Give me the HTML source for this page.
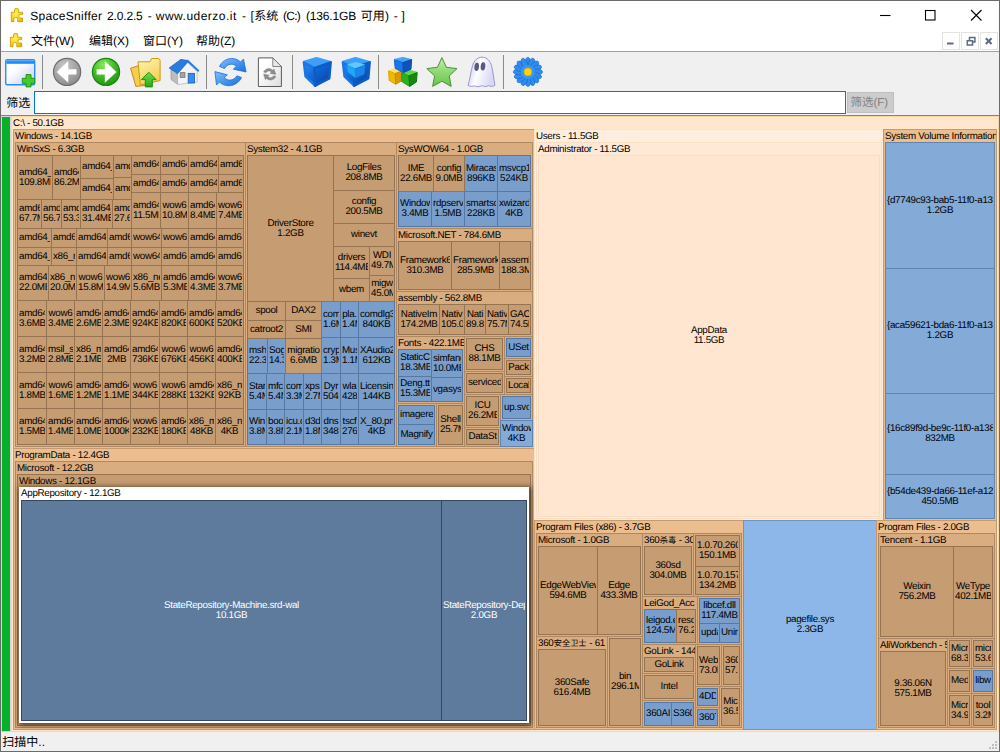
<!DOCTYPE html>
<html><head><meta charset="utf-8"><title>SpaceSniffer</title>
<style>
*{box-sizing:border-box;margin:0;padding:0}
html,body{width:1000px;height:752px;overflow:hidden;background:#fff}
body{font-family:"Liberation Sans","Noto Sans CJK SC",sans-serif;position:relative;color:#000;text-rendering:geometricPrecision;-webkit-font-smoothing:antialiased}
#win{position:absolute;left:0;top:0;width:1000px;height:752px;border:1px solid #6b6b6b;background:#fff;overflow:hidden}
.abs{position:absolute}
.k{display:inline-block;font-family:"Liberation Sans","Noto Sans CJK SC",sans-serif;letter-spacing:0;white-space:nowrap}
#title{position:absolute;left:0;top:8px;font-size:12px;line-height:16px;white-space:nowrap}
#title span{position:absolute;top:0;white-space:pre}
#title span.k{position:static}
#menu span{position:absolute;top:33.4px;font-size:12px;line-height:16px;white-space:nowrap}
#menu span.k{position:static}
#tb{position:absolute;left:1px;top:51px;width:998px;height:65px;background:#f0f0f0;border-top:1px solid #a0a0a0}
.sep{position:absolute;top:55px;width:1px;height:34px;background:#8a8a8a}
#tm{position:absolute;left:0;top:0;width:1000px;height:752px;font-size:9.8px;line-height:10px;letter-spacing:-0.3px}
.f{position:absolute;border:1px solid;overflow:hidden;white-space:nowrap}
.f .h,.hl .h{position:absolute;left:1px;top:1.600px;line-height:10px;white-space:nowrap}
.hl{position:absolute;background:#fff;overflow:hidden;box-shadow:1px 1px 5px 1px rgba(45,28,10,.8)}
.c{position:absolute;border:1px solid;overflow:hidden;display:flex;align-items:center}
.c b{display:block;width:100%;font-weight:normal;padding:0 1px;position:relative;top:0px}
.c i{display:block;font-style:normal;text-align:center;white-space:nowrap;overflow:hidden;height:10px}
.c.w{color:#fff}
#status{position:absolute;left:1px;top:732px;width:998px;height:19px;background:#f0f0f0}
</style></head><body>
<div id="win">
</div>
<!-- title bar -->
<div id="title">
<span style="left:30.3px;letter-spacing:.29px">SpaceSniffer</span>
<span style="left:107.1px;letter-spacing:-.17px">2.0.2.5</span>
<span style="left:147.8px">-</span>
<span style="left:155.8px;letter-spacing:.48px">www.uderzo.it</span>
<span style="left:242px">-</span>
<span style="left:250.4px">[</span>
<span style="left:254.2px"><span class="k" style="width:24px;font-size:12px">系统</span></span>
<span style="left:283px;letter-spacing:-.75px">(C:)</span>
<span style="left:306px;letter-spacing:-.17px">(136.1GB</span>
<span style="left:360.8px"><span class="k" style="width:24px;font-size:12px">可用</span></span>
<span style="left:385px">)</span><span style="left:393.8px">-</span><span style="left:401.6px">]</span>
</div>
<svg class="abs" style="left:0;top:0" width="30" height="52" viewBox="0 0 30 52">
<defs><radialGradient id="gpz" cx="0.4" cy="0.4" r="0.75"><stop offset="0" stop-color="#fff25a"/><stop offset="0.6" stop-color="#f6d21c"/><stop offset="1" stop-color="#e6ae00"/></radialGradient>
<path id="pz" d="M11.300 12.300H14.400V9.700Q14.400 8.400 16.500 8.400Q18.700 8.400 18.700 9.700V12.300H22.600V14.400H20.200Q18.900 14.400 18.900 16.200Q18.900 18 20.200 18H22.600V21.700H17.700V19.200Q17.700 17.500 15.800 17.500Q13.900 17.500 13.900 19.200V21.700H11.300Z" fill="url(#gpz)" stroke="#c99400" stroke-width=".8" stroke-linejoin="round"/></defs>
<use href="#pz"/><use href="#pz" x="-.9" y="25"/>
</svg>

<div id="menu">
<span style="left:31px"><span class="k" style="width:24px;font-size:12px">文件</span>(W)</span>
<span style="left:89px"><span class="k" style="width:24px;font-size:12px">编辑</span>(X)</span>
<span style="left:143px"><span class="k" style="width:24px;font-size:12px">窗口</span>(Y)</span>
<span style="left:196px"><span class="k" style="width:24px;font-size:12px">帮助</span>(Z)</span>
</div>
<!-- window controls -->
<svg class="abs" style="left:870px;top:5px" width="125" height="22" viewBox="0 0 125 22" fill="none" stroke="#000" stroke-width="1.1">
<path d="M10 10.5h10.5"/><rect x="55.5" y="5.5" width="9.5" height="9.5"/><path d="M101 5l10.5 10.5M111.5 5l-10.5 10.5"/></svg>
<!-- MDI controls -->
<div class="abs" style="left:942px;top:32px;width:18px;height:18px;border:1px solid #e3e3e3;background:#fff"></div>
<div class="abs" style="left:961px;top:32px;width:18px;height:18px;border:1px solid #e3e3e3;background:#fff"></div>
<div class="abs" style="left:980px;top:32px;width:18px;height:18px;border:1px solid #e3e3e3;background:#fff"></div>
<svg class="abs" style="left:942px;top:32px" width="56" height="18" viewBox="0 0 56 18" fill="none" stroke="#5d6b80">
<path d="M5 11.5h6.500" stroke-width="2"/>
<path d="M25.3 8.700h5.200v4.200h-5.200zM27.500 8.200v-2.700h5.400v4.400h-2.200" stroke-width="1.500"/>
<path d="M43.800 6.200l5.800 5.800M49.600 6.200l-5.800 5.800" stroke-width="2"/></svg>
<!-- toolbar -->
<div id="tb"></div>
<div class="sep" style="left:42px"></div><div class="sep" style="left:206px"></div><div class="sep" style="left:292px"></div><div class="sep" style="left:378px"></div><div class="sep" style="left:503px"></div>
<svg class="abs" style="left:0;top:52px" width="560" height="40" viewBox="0 52 560 40">
<defs>
<linearGradient id="gw" x1="0" y1="0" x2="1" y2="1"><stop offset="0.35" stop-color="#fff"/><stop offset="1" stop-color="#c4c6ff"/></linearGradient>
<radialGradient id="gg" cx="0.4" cy="0.3" r="0.8"><stop offset="0" stop-color="#c9c9c9"/><stop offset="1" stop-color="#858585"/></radialGradient>
<radialGradient id="gn" cx="0.4" cy="0.25" r="0.85"><stop offset="0" stop-color="#8be85a"/><stop offset="0.55" stop-color="#3db524"/><stop offset="1" stop-color="#1a8a0e"/></radialGradient>
<linearGradient id="gy" x1="0" y1="0" x2="0.4" y2="1"><stop offset="0" stop-color="#fff6b8"/><stop offset="1" stop-color="#f5cf4e"/></linearGradient>
<linearGradient id="gup" x1="0" y1="0" x2="0" y2="1"><stop offset="0" stop-color="#6ee04e"/><stop offset="1" stop-color="#28a818"/></linearGradient>
<linearGradient id="gb" x1="0" y1="0" x2="1" y2="1"><stop offset="0" stop-color="#7cc0ff"/><stop offset="1" stop-color="#1a6fdc"/></linearGradient>
<linearGradient id="gbl" x1="0" y1="0" x2="0.3" y2="1"><stop offset="0" stop-color="#2a8cf2"/><stop offset="1" stop-color="#0c5ccc"/></linearGradient>
<linearGradient id="gbr" x1="0" y1="0" x2="0.6" y2="1"><stop offset="0" stop-color="#1474e4"/><stop offset="1" stop-color="#0748a8"/></linearGradient>
<linearGradient id="gst" x1="0" y1="0" x2="0" y2="1"><stop offset="0" stop-color="#c4eeb0"/><stop offset="0.5" stop-color="#8fd970"/><stop offset="1" stop-color="#6cc548"/></linearGradient>
<linearGradient id="ggh" x1="0" y1="0" x2="1" y2="0.3"><stop offset="0" stop-color="#b4b4ee"/><stop offset="0.45" stop-color="#ffffff"/><stop offset="1" stop-color="#d8d8f6"/></linearGradient>
<linearGradient id="gpg" x1="0" y1="0" x2="1" y2="1"><stop offset="0.3" stop-color="#ffffff"/><stop offset="1" stop-color="#dcdcdc"/></linearGradient>
</defs>
<!-- 1 new window -->
<rect x="5.7" y="59.7" width="29" height="25" rx="1.5" fill="url(#gw)" stroke="#2a8df2" stroke-width="1.4"/>
<rect x="6.4" y="60.2" width="27.6" height="3.6" fill="#1c8cf6"/><rect x="6.4" y="60.2" width="27.6" height="1" fill="#63b4ff"/>
<path d="M26 74.6h5v3.7h3.7v5h-3.7v3.6h-5v-3.6h-3.7v-5H26z" fill="#45c92e" stroke="#1c9a0e" stroke-width="1"/>
<!-- 2 back -->
<circle cx="67.1" cy="71.9" r="13.6" fill="url(#gg)" stroke="#6f6f6f" stroke-width="1.2"/>
<path d="M56.6 71.9L68.3 61v8.200h8.200v5.400h-8.200v8.200z" fill="#fff"/>
<!-- 3 forward -->
<circle cx="106" cy="71.9" r="13.6" fill="url(#gn)" stroke="#1a8a0e" stroke-width="1.2"/>
<path d="M116.500 71.9L104.800 61v8.200h-8.200v5.400h8.200v8.200z" fill="#fff"/>
<!-- 4 folder up -->
<path d="M130.6 68.2l15-4.8 5.5 21.4-15.2 1.6z" fill="#f3ce52" stroke="#c28f10" stroke-width="1"/>
<path d="M138 61.8h12l1.600-3.300h7.200l1.300 1.600v20.500l-19.800 4.300z" fill="url(#gy)" stroke="#c99a14" stroke-width="1"/>
<path d="M148.8 72.3l7.400 7.300h-3.900v7.300h-7v-7.300h-3.900z" fill="url(#gup)" stroke="#1f9212" stroke-width="1"/>
<!-- 5 home -->
<path d="M171 69.5l6.600 4.200v10.500l-6.600-4.600z" fill="#bdbdbd" stroke="#8c8c8c" stroke-width=".6"/>
<path d="M177.6 73.5l10-11 9.600 9.200v10.400l-19.600 2.400z" fill="#f4f4f4" stroke="#a8a8a8" stroke-width=".6"/>
<path d="M169.2 68l11.600-8.600 7.200 1.200-10.600 12.600z" fill="#2a7ce0" stroke="#1a62c4" stroke-width=".8"/>
<path d="M176.6 73.6l11.200-12.600 11 10.200" fill="none" stroke="#2a7ce0" stroke-width="2"/>
<rect x="180.2" y="72.6" width="4.8" height="4.800" fill="#a4a4a4" stroke="#777" stroke-width=".8"/>
<rect x="188.2" y="73.4" width="6.2" height="9.6" fill="#3a8cec" stroke="#1a60c0" stroke-width=".9"/>
<!-- 6 refresh -->
<g fill="url(#gb)" stroke="#1e6ed6" stroke-width=".8" stroke-linejoin="round">
<path d="M219.500 66.500c3.500-8 14.500-11 21-4.500l3-3 2.600 13-12.800-2.800 3-3c-3.600-3.400-9.200-2.400-11.800 2.300z"/>
<path d="M241.500 77.500c-3.500 8-15 11.500-22 4.500l-3 3-1.600-13.400 12.400 3.200-3 3c4.200 3.800 9.800 2.600 12.600-2z"/>
</g>
<!-- 7 doc refresh -->
<path d="M258.4 57.9h14.400l8.600 8.600v20h-23z" fill="url(#gpg)" stroke="#5a5a5a" stroke-width="1"/>
<path d="M272.800 57.900v8.600h8.600z" fill="#e9e9e9" stroke="#6a6a6a" stroke-width=".8" stroke-linejoin="round"/>
<g fill="#8d8d8d" stroke="#7a7a7a" stroke-width=".4">
<path d="M263.6 72c1.800-3.600 6.200-4.600 9-1.800l1.400-1.400 1.800 5.600-5.800-1 1.400-1.400c-1.800-1.600-4.200-1.200-5.400.800z"/>
<path d="M276 76.600c-1.800 3.600-6.400 4.800-9.400 1.800l-1.400 1.200-1.600-5.600 5.600 1.200-1.400 1.400c2 1.800 4.400 1.400 5.800-.800z"/>
</g>
<!-- 8 cube -->
<g stroke-linejoin="round" stroke-width="2.600">
<path d="M304 62l12.500-3.800 14 4-16 5.800z" fill="#3f9ff8" stroke="#3f9ff8"/>
<path d="M304 62.600l10.400 5.600.800 17.400-9.600-9.400z" fill="url(#gbl)" stroke="#1a76e4"/>
<path d="M314.400 68.200l16.200-5.800-1.400 16-14 7.200z" fill="url(#gbr)" stroke="#0e5cc6"/>
</g>
<!-- 9 cube2 -->
<g stroke-linejoin="round" stroke-width="2.600">
<path d="M343 62l12.500-3.800 14 4-16 5.800z" fill="#3f9ff8" stroke="#3f9ff8"/>
<path d="M343 62.600l10.400 5.600.800 17.400-9.600-9.400z" fill="url(#gbl)" stroke="#1a76e4"/>
<path d="M353.400 68.200l16.200-5.800-1.400 16-14 7.200z" fill="url(#gbr)" stroke="#0e5cc6"/>
<path d="M347 64.500l9-2.400 9.400 2.600-10.400 3.800z" fill="#5cc8ff" stroke="none"/>
<path d="M347 64.800l7.800 3.800.4 9.400-7.400-6z" fill="#1ea8f6" stroke="none"/>
<path d="M354.800 68.600l10.400-3.800-.8 9.400-9.200 4z" fill="#1a86ea" stroke="none"/>
</g>
<!-- 10 cubes -->
<g stroke-linejoin="round" stroke-width="1">
<path d="M388.600 70.600l6-1.800 7.400 2.200-6.600 2.600z" fill="#ffe45a" stroke="#ffe45a"/>
<path d="M388.600 71l6.600 2.600.4 10.600-6.400-3.800z" fill="#f2b800" stroke="#e0a400"/>
<path d="M395.200 73.600l6.600-2.600v9.800l-6.200 3.400z" fill="#d89a00" stroke="#c88a00"/>
<path d="M401.600 72.400l7.600-2.400 8 2.400-8.200 3.200z" fill="#5cd84a" stroke="#5cd84a"/>
<path d="M401.600 72.800l7.400 3 .6 10.600-7.800-4.800z" fill="#2cb020" stroke="#22a018"/>
<path d="M409 75.800l8.200-3.200-.8 9.400-6.800 4.400z" fill="#168a10" stroke="#107a0c"/>
<path d="M394.400 59.400l8.400-2 8.800 2.200-8.600 3z" fill="#4aa2f8" stroke="#4aa2f8"/>
<path d="M394.400 59.800l8.600 2.800.4 10-8.200-4.200z" fill="#1a78e6" stroke="#1468d6"/>
<path d="M403 62.600l8.600-3-.6 9.600-7.600 3.400z" fill="#0c54bc" stroke="#0a4cae"/>
</g>
<!-- 11 star -->
<path d="M441.900 57.600l4.500 9.700 10.600 1.300-7.800 7.300 2 10.500-9.300-5.200-9.300 5.200 2-10.500-7.800-7.300 10.600-1.300z" fill="url(#gst)" stroke="#4f8f3c" stroke-width="1" stroke-linejoin="round"/>
<!-- 12 ghost -->
<path d="M468 85.400c2-6 2.600-13 4.400-19.400 1.600-5.600 5-8.800 9.600-8.800 5 0 8.400 3.600 9.800 9.400 1.400 6 2 13 3.200 18.600-1.600 1.400-4.600 1.600-6.400.4-2 1.200-5 1.200-6.800 0-2 1.400-5.400 1.400-7.200.2-2 .8-4.800.8-6.600-.4z" fill="url(#ggh)" stroke="#9090c4" stroke-width=".9"/>
<ellipse cx="476.700" cy="66.800" rx="2.300" ry="4.200" fill="#5a5a80" transform="rotate(6 476.400 66.900)"/>
<ellipse cx="483" cy="66.300" rx="2.300" ry="4.200" fill="#5a5a80" transform="rotate(6 482.600 66.300)"/>
<!-- 13 flower -->
<g transform="translate(527.900 71.900)">
<g fill="#2f8df0" stroke="#1a62c8" stroke-width=".6">
<g id="pt"><ellipse cx="0" cy="-9" rx="2.900" ry="5.600"/></g>
<use href="#pt" transform="rotate(22.500)"/><use href="#pt" transform="rotate(45)"/><use href="#pt" transform="rotate(67.500)"/><use href="#pt" transform="rotate(90)"/><use href="#pt" transform="rotate(112.500)"/><use href="#pt" transform="rotate(135)"/><use href="#pt" transform="rotate(157.500)"/><use href="#pt" transform="rotate(180)"/><use href="#pt" transform="rotate(202.500)"/><use href="#pt" transform="rotate(225)"/><use href="#pt" transform="rotate(247.500)"/><use href="#pt" transform="rotate(270)"/><use href="#pt" transform="rotate(292.500)"/><use href="#pt" transform="rotate(315)"/><use href="#pt" transform="rotate(337.500)"/>
</g>
<circle r="7" fill="#3a96f4"/>
<circle r="3.900" fill="#ffd500" stroke="#e8a800" stroke-width=".7"/>
</g>
</svg>

<!-- filter row -->
<div class="abs" style="left:6.3px;top:97px;line-height:12px;font-size:12px"><span class="k" style="width:24px;font-size:12px">筛选</span></div>
<div class="abs" style="left:34px;top:91px;width:812px;height:23px;background:#fff;border:1px solid #0078d7"></div>
<div class="abs" style="left:847px;top:92px;width:47px;height:21px;background:#cccccc;border:1px solid #bfbfbf;font-size:11.5px;line-height:21px;color:#838383;padding-left:2.500px;white-space:nowrap"><span class="k" style="width:23px;font-size:11.5px;color:#838383">筛选</span>(F)</div>
<!-- treemap -->
<div class="abs" style="left:1px;top:115px;width:998px;height:1px;background:#828282"></div>
<div class="abs" style="left:1px;top:116px;width:998px;height:616px;background:#d9d2da"></div>
<div class="abs" style="left:2px;top:117px;width:8px;height:614px;background:#07b02a"></div>
<div id="tm">
<div class="f" style="left:11px;top:116px;width:988px;height:616px;background:#fee7cc;border-color:#fdd6a6"><span class="h">C:\ - 50.1GB</span></div>
<div class="f" style="left:13px;top:129px;width:522px;height:320px;background:#ecbe8f;border-color:#c49a70"><span class="h">Windows - 14.1GB</span></div>
<div class="f" style="left:15px;top:142px;width:231px;height:305px;background:#d9ad80;border-color:#ae8862"><span class="h">WinSxS - 6.3GB</span></div>
<div class="f" style="left:245px;top:142px;width:152px;height:305px;background:#d9ad80;border-color:#ae8862"><span class="h">System32 - 4.1GB</span></div>
<div class="f" style="left:396px;top:142px;width:137px;height:87px;background:#d9ad80;border-color:#ae8862"><span class="h">SysWOW64 - 1.0GB</span></div>
<div class="f" style="left:396px;top:228px;width:137px;height:64px;background:#d9ad80;border-color:#ae8862"><span class="h">Microsoft.NET - 784.6MB</span></div>
<div class="f" style="left:396px;top:291px;width:137px;height:46px;background:#d9ad80;border-color:#ae8862"><span class="h">assembly - 562.8MB</span></div>
<div class="f" style="left:396px;top:336px;width:69px;height:68px;background:#d9ad80;border-color:#ae8862"><span class="h">Fonts - 422.1MB</span></div>
<div class="f" style="left:464px;top:336px;width:41px;height:36px;background:#d9ad80;border-color:#ae8862"></div>
<div class="f" style="left:464px;top:371px;width:41px;height:24px;background:#d9ad80;border-color:#ae8862"></div>
<div class="f" style="left:504px;top:336px;width:29px;height:23px;background:#d9ad80;border-color:#ae8862"></div>
<div class="f" style="left:504px;top:358px;width:29px;height:19px;background:#d9ad80;border-color:#ae8862"></div>
<div class="f" style="left:504px;top:376px;width:29px;height:19px;background:#d9ad80;border-color:#ae8862"></div>
<div class="f" style="left:396px;top:403px;width:41px;height:44px;background:#d9ad80;border-color:#ae8862"></div>
<div class="f" style="left:436px;top:403px;width:29px;height:44px;background:#d9ad80;border-color:#ae8862"></div>
<div class="f" style="left:464px;top:394px;width:37px;height:34px;background:#d9ad80;border-color:#ae8862"></div>
<div class="f" style="left:464px;top:427px;width:37px;height:20px;background:#d9ad80;border-color:#ae8862"></div>
<div class="f" style="left:500px;top:394px;width:33px;height:27px;background:#d9ad80;border-color:#ae8862"></div>
<div class="c " style="left:500px;top:420px;width:33px;height:27px;background:#84aad8;border-color:#6284b0"><b><i>Window</i><i>4KB</i></b></div>
<div class="f" style="left:13px;top:448px;width:522px;height:282px;background:#ecbe8f;border-color:#c49a70"><span class="h">ProgramData - 12.4GB</span></div>
<div class="f" style="left:15px;top:461px;width:518px;height:267px;background:#d9ad80;border-color:#ae8862"><span class="h">Microsoft - 12.2GB</span></div>
<div class="f" style="left:17px;top:474px;width:514px;height:252px;background:#c69c72;border-color:#967452"><span class="h">Windows - 12.1GB</span></div>
<div class="hl" style="left:19px;top:487px;width:510px;height:236px"><span class="h" style="left:2px">AppRepository - 12.1GB</span></div>
<div class="c w" style="left:21px;top:500px;width:421px;height:221px;background:#5e7b9d;border-color:#344862"><b><i>StateRepository-Machine.srd-wal</i><i>10.1GB</i></b></div>
<div class="c w" style="left:441px;top:500px;width:86px;height:221px;background:#5e7b9d;border-color:#344862"><b><i>StateRepository-Dep</i><i>2.0GB</i></b></div>
<div class="f" style="left:534px;top:129px;width:350px;height:392px;background:#ffeede;border-color:#fde2cb"><span class="h">Users - 11.5GB</span></div>
<div class="f" style="left:536px;top:142px;width:346px;height:377px;background:#fee9d6;border-color:#fcdec4"><span class="h">Administrator - 11.5GB</span></div>
<div class="c " style="left:538px;top:155px;width:342px;height:362px;background:#fee6d1;border-color:#fcdcc0"><b><i>AppData</i><i>11.5GB</i></b></div>
<div class="f" style="left:883px;top:129px;width:114px;height:392px;background:#ecbe8f;border-color:#c49a70"><span class="h">System Volume Information</span></div>
<div class="c " style="left:885px;top:142px;width:110px;height:127px;background:#84aad8;border-color:#6284b0"><b><i>{d7749c93-bab5-11f0-a13b</i><i>1.2GB</i></b></div>
<div class="c " style="left:885px;top:268px;width:110px;height:126px;background:#84aad8;border-color:#6284b0"><b><i>{aca59621-bda6-11f0-a13b</i><i>1.2GB</i></b></div>
<div class="c " style="left:885px;top:393px;width:110px;height:82px;background:#84aad8;border-color:#6284b0"><b><i>{16c89f9d-be9c-11f0-a138</i><i>832MB</i></b></div>
<div class="c " style="left:885px;top:474px;width:110px;height:45px;background:#84aad8;border-color:#6284b0"><b><i>{b54de439-da66-11ef-a12</i><i>450.5MB</i></b></div>
<div class="f" style="left:534px;top:520px;width:210px;height:210px;background:#ecbe8f;border-color:#c49a70"><span class="h">Program Files (x86) - 3.7GB</span></div>
<div class="f" style="left:536px;top:533px;width:107px;height:104px;background:#d9ad80;border-color:#ae8862"><span class="h">Microsoft - 1.0GB</span></div>
<div class="f" style="left:536px;top:636px;width:72px;height:92px;background:#d9ad80;border-color:#ae8862"><span class="h">360<span class="k" style="width:32.8px;font-size:8.2px;margin:0 0.3px">安全卫士</span> - 61</span></div>
<div class="f" style="left:607px;top:636px;width:36px;height:92px;background:#d9ad80;border-color:#ae8862"></div>
<div class="f" style="left:642px;top:533px;width:52px;height:64px;background:#d9ad80;border-color:#ae8862"><span class="h">360<span class="k" style="width:16.4px;font-size:8.2px;margin:0 0.3px">杀毒</span> - 30</span></div>
<div class="f" style="left:693px;top:533px;width:49px;height:64px;background:#d9ad80;border-color:#ae8862"></div>
<div class="f" style="left:642px;top:596px;width:56px;height:49px;background:#d9ad80;border-color:#ae8862"><span class="h">LeiGod_Acc - 2</span></div>
<div class="f" style="left:697px;top:596px;width:45px;height:49px;background:#d9ad80;border-color:#ae8862"></div>
<div class="f" style="left:642px;top:644px;width:54px;height:30px;background:#d9ad80;border-color:#ae8862"><span class="h">GoLink - 144</span></div>
<div class="f" style="left:642px;top:673px;width:54px;height:28px;background:#d9ad80;border-color:#ae8862"></div>
<div class="f" style="left:642px;top:700px;width:54px;height:28px;background:#d9ad80;border-color:#ae8862"></div>
<div class="f" style="left:695px;top:644px;width:27px;height:43px;background:#d9ad80;border-color:#ae8862"></div>
<div class="f" style="left:721px;top:644px;width:21px;height:43px;background:#d9ad80;border-color:#ae8862"></div>
<div class="f" style="left:695px;top:686px;width:25px;height:22px;background:#d9ad80;border-color:#ae8862"></div>
<div class="f" style="left:695px;top:707px;width:25px;height:21px;background:#d9ad80;border-color:#ae8862"></div>
<div class="f" style="left:719px;top:686px;width:23px;height:42px;background:#d9ad80;border-color:#ae8862"></div>
<div class="c " style="left:743px;top:520px;width:134px;height:210px;background:#8db7e8;border-color:#6e94c4"><b><i>pagefile.sys</i><i>2.3GB</i></b></div>
<div class="f" style="left:876px;top:520px;width:121px;height:210px;background:#ecbe8f;border-color:#c49a70"><span class="h">Program Files - 2.0GB</span></div>
<div class="f" style="left:878px;top:533px;width:117px;height:106px;background:#d9ad80;border-color:#ae8862"><span class="h">Tencent - 1.1GB</span></div>
<div class="f" style="left:878px;top:638px;width:70px;height:90px;background:#d9ad80;border-color:#ae8862"><span class="h">AliWorkbench - 5</span></div>
<div class="f" style="left:947px;top:638px;width:25px;height:31px;background:#d9ad80;border-color:#ae8862"></div>
<div class="f" style="left:971px;top:638px;width:24px;height:31px;background:#d9ad80;border-color:#ae8862"></div>
<div class="f" style="left:947px;top:668px;width:25px;height:26px;background:#d9ad80;border-color:#ae8862"></div>
<div class="f" style="left:971px;top:668px;width:24px;height:26px;background:#d9ad80;border-color:#ae8862"></div>
<div class="f" style="left:947px;top:693px;width:25px;height:35px;background:#d9ad80;border-color:#ae8862"></div>
<div class="f" style="left:971px;top:693px;width:24px;height:35px;background:#d9ad80;border-color:#ae8862"></div>
<div class="c " style="left:321px;top:301px;width:20px;height:37px;background:#7a9ecc;border-color:#5878a2"><b><i>com</i><i>1.6MB</i></b></div>
<div class="c " style="left:340px;top:301px;width:19px;height:37px;background:#7a9ecc;border-color:#5878a2"><b><i>pla.</i><i>1.4MB</i></b></div>
<div class="c " style="left:358px;top:301px;width:37px;height:37px;background:#7a9ecc;border-color:#5878a2"><b><i>comdlg3</i><i>840KB</i></b></div>
<div class="c " style="left:321px;top:337px;width:20px;height:37px;background:#7a9ecc;border-color:#5878a2"><b><i>cryp</i><i>1.3MB</i></b></div>
<div class="c " style="left:340px;top:337px;width:19px;height:37px;background:#7a9ecc;border-color:#5878a2"><b><i>Mus</i><i>1.1MB</i></b></div>
<div class="c " style="left:358px;top:337px;width:37px;height:37px;background:#7a9ecc;border-color:#5878a2"><b><i>XAudio2</i><i>612KB</i></b></div>
<div class="c " style="left:321px;top:373px;width:20px;height:37px;background:#7a9ecc;border-color:#5878a2"><b><i>Dyr</i><i>504KB</i></b></div>
<div class="c " style="left:340px;top:373px;width:19px;height:37px;background:#7a9ecc;border-color:#5878a2"><b><i>wla</i><i>428KB</i></b></div>
<div class="c " style="left:358px;top:373px;width:37px;height:37px;background:#7a9ecc;border-color:#5878a2"><b><i>Licensing</i><i>144KB</i></b></div>
<div class="c " style="left:321px;top:409px;width:20px;height:36px;background:#7a9ecc;border-color:#5878a2"><b><i>dns</i><i>348KB</i></b></div>
<div class="c " style="left:340px;top:409px;width:19px;height:36px;background:#7a9ecc;border-color:#5878a2"><b><i>tscf</i><i>276KB</i></b></div>
<div class="c " style="left:358px;top:409px;width:37px;height:36px;background:#7a9ecc;border-color:#5878a2"><b><i>X_80.pn</i><i>4KB</i></b></div>
<div class="c " style="left:247px;top:338px;width:21px;height:36px;background:#7a9ecc;border-color:#5878a2"><b><i>msh</i><i>22.3MB</i></b></div>
<div class="c " style="left:267px;top:338px;width:19px;height:36px;background:#7a9ecc;border-color:#5878a2"><b><i>Sog</i><i>14.3MB</i></b></div>
<div class="c " style="left:247px;top:373px;width:20px;height:37px;background:#7a9ecc;border-color:#5878a2"><b><i>Star</i><i>5.4MB</i></b></div>
<div class="c " style="left:266px;top:373px;width:19px;height:37px;background:#7a9ecc;border-color:#5878a2"><b><i>mfc</i><i>5.4MB</i></b></div>
<div class="c " style="left:284px;top:373px;width:20px;height:37px;background:#7a9ecc;border-color:#5878a2"><b><i>com</i><i>3.3MB</i></b></div>
<div class="c " style="left:303px;top:373px;width:19px;height:37px;background:#7a9ecc;border-color:#5878a2"><b><i>xpss</i><i>2.7MB</i></b></div>
<div class="c " style="left:247px;top:409px;width:20px;height:36px;background:#7a9ecc;border-color:#5878a2"><b><i>Win</i><i>3.8MB</i></b></div>
<div class="c " style="left:266px;top:409px;width:19px;height:36px;background:#7a9ecc;border-color:#5878a2"><b><i>boo</i><i>3.8MB</i></b></div>
<div class="c " style="left:284px;top:409px;width:20px;height:36px;background:#7a9ecc;border-color:#5878a2"><b><i>icu.c</i><i>2.1MB</i></b></div>
<div class="c " style="left:303px;top:409px;width:19px;height:36px;background:#7a9ecc;border-color:#5878a2"><b><i>d3d</i><i>1.8MB</i></b></div>
<div class="c " style="left:464px;top:155px;width:34px;height:37px;background:#7a9ecc;border-color:#5878a2"><b><i>Miracas</i><i>896KB</i></b></div>
<div class="c " style="left:497px;top:155px;width:34px;height:37px;background:#7a9ecc;border-color:#5878a2"><b><i>msvcp1</i><i>524KB</i></b></div>
<div class="c " style="left:398px;top:191px;width:34px;height:36px;background:#7a9ecc;border-color:#5878a2"><b><i>Window</i><i>3.4MB</i></b></div>
<div class="c " style="left:431px;top:191px;width:34px;height:36px;background:#7a9ecc;border-color:#5878a2"><b><i>rdpserv</i><i>1.5MB</i></b></div>
<div class="c " style="left:464px;top:191px;width:34px;height:36px;background:#7a9ecc;border-color:#5878a2"><b><i>smartsc</i><i>228KB</i></b></div>
<div class="c " style="left:497px;top:191px;width:34px;height:36px;background:#7a9ecc;border-color:#5878a2"><b><i>xwizard</i><i>4KB</i></b></div>
<div class="c " style="left:398px;top:349px;width:34px;height:28px;background:#7a9ecc;border-color:#5878a2"><b><i>StaticC</i><i>18.3MB</i></b></div>
<div class="c " style="left:431px;top:349px;width:32px;height:29px;background:#7a9ecc;border-color:#5878a2"><b><i>simfang</i><i>10.0MB</i></b></div>
<div class="c " style="left:398px;top:376px;width:34px;height:26px;background:#7a9ecc;border-color:#5878a2"><b><i>Deng.tt</i><i>15.3MB</i></b></div>
<div class="c " style="left:431px;top:377px;width:32px;height:25px;background:#7a9ecc;border-color:#5878a2"><b><i>vgasys</i></b></div>
<div class="c " style="left:506px;top:338px;width:25px;height:19px;background:#7a9ecc;border-color:#5878a2"><b><i>USet</i></b></div>
<div class="c " style="left:398px;top:405px;width:37px;height:20px;background:#7a9ecc;border-color:#5878a2"><b><i>imagere</i></b></div>
<div class="c " style="left:398px;top:424px;width:37px;height:21px;background:#7a9ecc;border-color:#5878a2"><b><i>Magnify</i></b></div>
<div class="c " style="left:502px;top:396px;width:29px;height:23px;background:#7a9ecc;border-color:#5878a2"><b><i>up.svc</i></b></div>
<div class="c " style="left:644px;top:609px;width:33px;height:34px;background:#7a9ecc;border-color:#5878a2"><b><i>leigod.e</i><i>124.5MB</i></b></div>
<div class="c " style="left:699px;top:598px;width:41px;height:26px;background:#7a9ecc;border-color:#5878a2"><b><i>libcef.dll</i><i>117.4MB</i></b></div>
<div class="c " style="left:699px;top:623px;width:21px;height:20px;background:#7a9ecc;border-color:#5878a2"><b><i>upda</i></b></div>
<div class="c " style="left:719px;top:623px;width:21px;height:20px;background:#7a9ecc;border-color:#5878a2"><b><i>Unin</i></b></div>
<div class="c " style="left:644px;top:702px;width:28px;height:24px;background:#7a9ecc;border-color:#5878a2"><b><i>360AI</i></b></div>
<div class="c " style="left:671px;top:702px;width:23px;height:24px;background:#7a9ecc;border-color:#5878a2"><b><i>S360</i></b></div>
<div class="c " style="left:697px;top:688px;width:21px;height:18px;background:#7a9ecc;border-color:#5878a2"><b><i>4DD</i></b></div>
<div class="c " style="left:697px;top:709px;width:21px;height:17px;background:#7a9ecc;border-color:#5878a2"><b><i>360T</i></b></div>
<div class="c " style="left:973px;top:670px;width:20px;height:22px;background:#7a9ecc;border-color:#5878a2"><b><i>libw</i></b></div>
<div class="c " style="left:17px;top:155px;width:36px;height:45px;background:#c69c72;border-color:#967452"><b><i>amd64_</i><i>109.8MB</i></b></div>
<div class="c " style="left:52px;top:155px;width:29px;height:45px;background:#c69c72;border-color:#967452"><b><i>amd64</i><i>86.2MB</i></b></div>
<div class="c " style="left:80px;top:155px;width:34px;height:24px;background:#c69c72;border-color:#967452"><b><i>amd64_</i></b></div>
<div class="c " style="left:113px;top:155px;width:19px;height:23px;background:#c69c72;border-color:#967452"><b><i>amd64</i></b></div>
<div class="c " style="left:80px;top:178px;width:34px;height:22px;background:#c69c72;border-color:#967452"><b><i>amd64_</i></b></div>
<div class="c " style="left:113px;top:177px;width:19px;height:23px;background:#c69c72;border-color:#967452"><b><i>amd64</i></b></div>
<div class="c " style="left:131px;top:155px;width:30px;height:20px;background:#c69c72;border-color:#967452"><b><i>amd64</i></b></div>
<div class="c " style="left:160px;top:155px;width:29px;height:20px;background:#c69c72;border-color:#967452"><b><i>amd64</i></b></div>
<div class="c " style="left:188px;top:155px;width:31px;height:20px;background:#c69c72;border-color:#967452"><b><i>amd64</i></b></div>
<div class="c " style="left:218px;top:155px;width:26px;height:20px;background:#c69c72;border-color:#967452"><b><i>amd64</i></b></div>
<div class="c " style="left:131px;top:174px;width:30px;height:19px;background:#c69c72;border-color:#967452"><b><i>amd64</i></b></div>
<div class="c " style="left:160px;top:174px;width:29px;height:19px;background:#c69c72;border-color:#967452"><b><i>amd64</i></b></div>
<div class="c " style="left:188px;top:174px;width:31px;height:19px;background:#c69c72;border-color:#967452"><b><i>amd64</i></b></div>
<div class="c " style="left:218px;top:174px;width:26px;height:19px;background:#c69c72;border-color:#967452"><b><i>amd64</i></b></div>
<div class="c " style="left:131px;top:192px;width:30px;height:37px;background:#c69c72;border-color:#967452"><b><i>amd64</i><i>11.5MB</i></b></div>
<div class="c " style="left:160px;top:192px;width:29px;height:37px;background:#c69c72;border-color:#967452"><b><i>wow6</i><i>10.8MB</i></b></div>
<div class="c " style="left:188px;top:192px;width:29px;height:37px;background:#c69c72;border-color:#967452"><b><i>amd64</i><i>8.4MB</i></b></div>
<div class="c " style="left:216px;top:192px;width:28px;height:37px;background:#c69c72;border-color:#967452"><b><i>wow6</i><i>7.4MB</i></b></div>
<div class="c " style="left:17px;top:199px;width:25px;height:30px;background:#c69c72;border-color:#967452"><b><i>amd64</i><i>67.7MB</i></b></div>
<div class="c " style="left:41px;top:199px;width:21px;height:30px;background:#c69c72;border-color:#967452"><b><i>amd64</i><i>56.7MB</i></b></div>
<div class="c " style="left:61px;top:199px;width:20px;height:30px;background:#c69c72;border-color:#967452"><b><i>amd64</i><i>53.3MB</i></b></div>
<div class="c " style="left:80px;top:199px;width:33px;height:30px;background:#c69c72;border-color:#967452"><b><i>amd64_</i><i>31.4MB</i></b></div>
<div class="c " style="left:112px;top:199px;width:20px;height:30px;background:#c69c72;border-color:#967452"><b><i>amd64</i><i>27.6MB</i></b></div>
<div class="c " style="left:17px;top:228px;width:35px;height:20px;background:#c69c72;border-color:#967452"><b><i>amd64_</i></b></div>
<div class="c " style="left:51px;top:228px;width:26px;height:20px;background:#c69c72;border-color:#967452"><b><i>amd64</i></b></div>
<div class="c " style="left:76px;top:228px;width:32px;height:20px;background:#c69c72;border-color:#967452"><b><i>amd64</i></b></div>
<div class="c " style="left:107px;top:228px;width:25px;height:20px;background:#c69c72;border-color:#967452"><b><i>amd64</i></b></div>
<div class="c " style="left:131px;top:228px;width:31px;height:20px;background:#c69c72;border-color:#967452"><b><i>wow64</i></b></div>
<div class="c " style="left:161px;top:228px;width:28px;height:20px;background:#c69c72;border-color:#967452"><b><i>wow6</i></b></div>
<div class="c " style="left:188px;top:228px;width:29px;height:20px;background:#c69c72;border-color:#967452"><b><i>amd64</i></b></div>
<div class="c " style="left:216px;top:228px;width:28px;height:20px;background:#c69c72;border-color:#967452"><b><i>amd64</i></b></div>
<div class="c " style="left:17px;top:247px;width:35px;height:19px;background:#c69c72;border-color:#967452"><b><i>amd64_</i></b></div>
<div class="c " style="left:51px;top:247px;width:26px;height:19px;background:#c69c72;border-color:#967452"><b><i>x86_n</i></b></div>
<div class="c " style="left:76px;top:247px;width:32px;height:19px;background:#c69c72;border-color:#967452"><b><i>amd64</i></b></div>
<div class="c " style="left:107px;top:247px;width:25px;height:19px;background:#c69c72;border-color:#967452"><b><i>amd64</i></b></div>
<div class="c " style="left:131px;top:247px;width:31px;height:19px;background:#c69c72;border-color:#967452"><b><i>wow64</i></b></div>
<div class="c " style="left:161px;top:247px;width:28px;height:19px;background:#c69c72;border-color:#967452"><b><i>amd64</i></b></div>
<div class="c " style="left:188px;top:247px;width:29px;height:19px;background:#c69c72;border-color:#967452"><b><i>amd64</i></b></div>
<div class="c " style="left:216px;top:247px;width:28px;height:19px;background:#c69c72;border-color:#967452"><b><i>amd64</i></b></div>
<div class="c " style="left:17px;top:265px;width:32px;height:36px;background:#c69c72;border-color:#967452"><b><i>amd64</i><i>22.0MB</i></b></div>
<div class="c " style="left:48px;top:265px;width:29px;height:36px;background:#c69c72;border-color:#967452"><b><i>x86_ne</i><i>20.0MB</i></b></div>
<div class="c " style="left:76px;top:265px;width:29px;height:36px;background:#c69c72;border-color:#967452"><b><i>wow6</i><i>15.8MB</i></b></div>
<div class="c " style="left:104px;top:265px;width:28px;height:36px;background:#c69c72;border-color:#967452"><b><i>wow6</i><i>14.9MB</i></b></div>
<div class="c " style="left:131px;top:265px;width:31px;height:36px;background:#c69c72;border-color:#967452"><b><i>x86_ne</i><i>5.6MB</i></b></div>
<div class="c " style="left:161px;top:265px;width:28px;height:36px;background:#c69c72;border-color:#967452"><b><i>amd64</i><i>5.3MB</i></b></div>
<div class="c " style="left:188px;top:265px;width:29px;height:36px;background:#c69c72;border-color:#967452"><b><i>amd64</i><i>4.3MB</i></b></div>
<div class="c " style="left:216px;top:265px;width:28px;height:36px;background:#c69c72;border-color:#967452"><b><i>wow6</i><i>3.7MB</i></b></div>
<div class="c " style="left:17px;top:300px;width:30px;height:37px;background:#c69c72;border-color:#967452"><b><i>amd64</i><i>3.6MB</i></b></div>
<div class="c " style="left:46px;top:300px;width:29px;height:37px;background:#c69c72;border-color:#967452"><b><i>wow6</i><i>3.4MB</i></b></div>
<div class="c " style="left:74px;top:300px;width:29px;height:37px;background:#c69c72;border-color:#967452"><b><i>amd64</i><i>2.6MB</i></b></div>
<div class="c " style="left:102px;top:300px;width:29px;height:37px;background:#c69c72;border-color:#967452"><b><i>amd64</i><i>2.3MB</i></b></div>
<div class="c " style="left:130px;top:300px;width:30px;height:37px;background:#c69c72;border-color:#967452"><b><i>amd64</i><i>924KB</i></b></div>
<div class="c " style="left:159px;top:300px;width:29px;height:37px;background:#c69c72;border-color:#967452"><b><i>amd64</i><i>820KB</i></b></div>
<div class="c " style="left:187px;top:300px;width:29px;height:37px;background:#c69c72;border-color:#967452"><b><i>amd64</i><i>600KB</i></b></div>
<div class="c " style="left:215px;top:300px;width:29px;height:37px;background:#c69c72;border-color:#967452"><b><i>amd64</i><i>520KB</i></b></div>
<div class="c " style="left:17px;top:336px;width:30px;height:37px;background:#c69c72;border-color:#967452"><b><i>amd64</i><i>3.2MB</i></b></div>
<div class="c " style="left:46px;top:336px;width:29px;height:37px;background:#c69c72;border-color:#967452"><b><i>msil_s</i><i>2.8MB</i></b></div>
<div class="c " style="left:74px;top:336px;width:29px;height:37px;background:#c69c72;border-color:#967452"><b><i>x86_m</i><i>2.1MB</i></b></div>
<div class="c " style="left:102px;top:336px;width:29px;height:37px;background:#c69c72;border-color:#967452"><b><i>amd64</i><i>2MB</i></b></div>
<div class="c " style="left:130px;top:336px;width:30px;height:37px;background:#c69c72;border-color:#967452"><b><i>amd64</i><i>736KB</i></b></div>
<div class="c " style="left:159px;top:336px;width:29px;height:37px;background:#c69c72;border-color:#967452"><b><i>wow6</i><i>676KB</i></b></div>
<div class="c " style="left:187px;top:336px;width:29px;height:37px;background:#c69c72;border-color:#967452"><b><i>wow6</i><i>456KB</i></b></div>
<div class="c " style="left:215px;top:336px;width:29px;height:37px;background:#c69c72;border-color:#967452"><b><i>amd64</i><i>400KB</i></b></div>
<div class="c " style="left:17px;top:372px;width:30px;height:37px;background:#c69c72;border-color:#967452"><b><i>amd64</i><i>1.8MB</i></b></div>
<div class="c " style="left:46px;top:372px;width:29px;height:37px;background:#c69c72;border-color:#967452"><b><i>wow6</i><i>1.6MB</i></b></div>
<div class="c " style="left:74px;top:372px;width:29px;height:37px;background:#c69c72;border-color:#967452"><b><i>amd64</i><i>1.2MB</i></b></div>
<div class="c " style="left:102px;top:372px;width:29px;height:37px;background:#c69c72;border-color:#967452"><b><i>amd64</i><i>1.1MB</i></b></div>
<div class="c " style="left:130px;top:372px;width:30px;height:37px;background:#c69c72;border-color:#967452"><b><i>wow6</i><i>344KB</i></b></div>
<div class="c " style="left:159px;top:372px;width:29px;height:37px;background:#c69c72;border-color:#967452"><b><i>wow6</i><i>288KB</i></b></div>
<div class="c " style="left:187px;top:372px;width:29px;height:37px;background:#c69c72;border-color:#967452"><b><i>amd64</i><i>132KB</i></b></div>
<div class="c " style="left:215px;top:372px;width:29px;height:37px;background:#c69c72;border-color:#967452"><b><i>x86_ne</i><i>92KB</i></b></div>
<div class="c " style="left:17px;top:408px;width:30px;height:37px;background:#c69c72;border-color:#967452"><b><i>amd64</i><i>1.5MB</i></b></div>
<div class="c " style="left:46px;top:408px;width:29px;height:37px;background:#c69c72;border-color:#967452"><b><i>amd64</i><i>1.4MB</i></b></div>
<div class="c " style="left:74px;top:408px;width:29px;height:37px;background:#c69c72;border-color:#967452"><b><i>amd64</i><i>1.0MB</i></b></div>
<div class="c " style="left:102px;top:408px;width:29px;height:37px;background:#c69c72;border-color:#967452"><b><i>amd64</i><i>1000KB</i></b></div>
<div class="c " style="left:130px;top:408px;width:30px;height:37px;background:#c69c72;border-color:#967452"><b><i>wow6</i><i>232KB</i></b></div>
<div class="c " style="left:159px;top:408px;width:29px;height:37px;background:#c69c72;border-color:#967452"><b><i>amd64</i><i>180KB</i></b></div>
<div class="c " style="left:187px;top:408px;width:29px;height:37px;background:#c69c72;border-color:#967452"><b><i>x86_m</i><i>48KB</i></b></div>
<div class="c " style="left:215px;top:408px;width:29px;height:37px;background:#c69c72;border-color:#967452"><b><i>x86_ne</i><i>4KB</i></b></div>
<div class="c " style="left:247px;top:155px;width:87px;height:147px;background:#c69c72;border-color:#967452"><b><i>DriverStore</i><i>1.2GB</i></b></div>
<div class="c " style="left:333px;top:155px;width:62px;height:36px;background:#c69c72;border-color:#967452"><b><i>LogFiles</i><i>208.8MB</i></b></div>
<div class="c " style="left:333px;top:190px;width:62px;height:34px;background:#c69c72;border-color:#967452"><b><i>config</i><i>200.5MB</i></b></div>
<div class="c " style="left:333px;top:223px;width:62px;height:24px;background:#c69c72;border-color:#967452"><b><i>winevt</i></b></div>
<div class="c " style="left:333px;top:246px;width:37px;height:33px;background:#c69c72;border-color:#967452"><b><i>drivers</i><i>114.4MB</i></b></div>
<div class="c " style="left:369px;top:246px;width:26px;height:30px;background:#c69c72;border-color:#967452"><b><i>WDI</i><i>49.7MB</i></b></div>
<div class="c " style="left:333px;top:278px;width:37px;height:24px;background:#c69c72;border-color:#967452"><b><i>wbem</i></b></div>
<div class="c " style="left:369px;top:275px;width:26px;height:27px;background:#c69c72;border-color:#967452"><b><i>migw</i><i>45.0MB</i></b></div>
<div class="c " style="left:247px;top:301px;width:39px;height:20px;background:#c69c72;border-color:#967452"><b><i>spool</i></b></div>
<div class="c " style="left:285px;top:301px;width:37px;height:20px;background:#c69c72;border-color:#967452"><b><i>DAX2</i></b></div>
<div class="c " style="left:247px;top:320px;width:39px;height:19px;background:#c69c72;border-color:#967452"><b><i>catroot2</i></b></div>
<div class="c " style="left:285px;top:320px;width:37px;height:19px;background:#c69c72;border-color:#967452"><b><i>SMI</i></b></div>
<div class="c " style="left:285px;top:338px;width:37px;height:36px;background:#c69c72;border-color:#967452"><b><i>migratio</i><i>6.6MB</i></b></div>
<div class="c " style="left:398px;top:155px;width:36px;height:37px;background:#c69c72;border-color:#967452"><b><i>IME</i><i>22.6MB</i></b></div>
<div class="c " style="left:433px;top:155px;width:32px;height:37px;background:#c69c72;border-color:#967452"><b><i>config</i><i>9.0MB</i></b></div>
<div class="c " style="left:398px;top:241px;width:54px;height:49px;background:#c69c72;border-color:#967452"><b><i>Framework6</i><i>310.3MB</i></b></div>
<div class="c " style="left:451px;top:241px;width:49px;height:49px;background:#c69c72;border-color:#967452"><b><i>Framework</i><i>285.9MB</i></b></div>
<div class="c " style="left:499px;top:241px;width:32px;height:49px;background:#c69c72;border-color:#967452"><b><i>assembl</i><i>188.3MB</i></b></div>
<div class="c " style="left:398px;top:304px;width:42px;height:31px;background:#c69c72;border-color:#967452"><b><i>NativeIm</i><i>174.2MB</i></b></div>
<div class="c " style="left:439px;top:304px;width:26px;height:31px;background:#c69c72;border-color:#967452"><b><i>Nativ</i><i>105.0MB</i></b></div>
<div class="c " style="left:464px;top:304px;width:22px;height:31px;background:#c69c72;border-color:#967452"><b><i>Nati</i><i>89.8MB</i></b></div>
<div class="c " style="left:485px;top:304px;width:24px;height:31px;background:#c69c72;border-color:#967452"><b><i>Nativ</i><i>75.7MB</i></b></div>
<div class="c " style="left:508px;top:304px;width:23px;height:31px;background:#c69c72;border-color:#967452"><b><i>GAC</i><i>74.5MB</i></b></div>
<div class="c " style="left:466px;top:338px;width:37px;height:32px;background:#c69c72;border-color:#967452"><b><i>CHS</i><i>88.1MB</i></b></div>
<div class="c " style="left:466px;top:373px;width:37px;height:20px;background:#c69c72;border-color:#967452"><b><i>serviced</i></b></div>
<div class="c " style="left:506px;top:360px;width:25px;height:15px;background:#c69c72;border-color:#967452"><b><i>Pack</i></b></div>
<div class="c " style="left:506px;top:378px;width:25px;height:15px;background:#c69c72;border-color:#967452"><b><i>Local</i></b></div>
<div class="c " style="left:438px;top:405px;width:25px;height:40px;background:#c69c72;border-color:#967452"><b><i>Shell</i><i>25.7MB</i></b></div>
<div class="c " style="left:466px;top:396px;width:33px;height:30px;background:#c69c72;border-color:#967452"><b><i>ICU</i><i>26.2MB</i></b></div>
<div class="c " style="left:466px;top:429px;width:33px;height:16px;background:#c69c72;border-color:#967452"><b><i>DataSt</i></b></div>
<div class="c " style="left:538px;top:546px;width:60px;height:89px;background:#c69c72;border-color:#967452"><b><i>EdgeWebView</i><i>594.6MB</i></b></div>
<div class="c " style="left:597px;top:546px;width:44px;height:89px;background:#c69c72;border-color:#967452"><b><i>Edge</i><i>433.3MB</i></b></div>
<div class="c " style="left:538px;top:649px;width:68px;height:77px;background:#c69c72;border-color:#967452"><b><i>360Safe</i><i>616.4MB</i></b></div>
<div class="c " style="left:609px;top:638px;width:32px;height:88px;background:#c69c72;border-color:#967452"><b><i>bin</i><i>296.1MB</i></b></div>
<div class="c " style="left:644px;top:546px;width:48px;height:49px;background:#c69c72;border-color:#967452"><b><i>360sd</i><i>304.0MB</i></b></div>
<div class="c " style="left:695px;top:535px;width:45px;height:32px;background:#c69c72;border-color:#967452"><b><i>1.0.70.260</i><i>150.1MB</i></b></div>
<div class="c " style="left:695px;top:566px;width:45px;height:29px;background:#c69c72;border-color:#967452"><b><i>1.0.70.157</i><i>134.2MB</i></b></div>
<div class="c " style="left:676px;top:609px;width:20px;height:34px;background:#c69c72;border-color:#967452"><b><i>reso</i><i>76.2MB</i></b></div>
<div class="c " style="left:644px;top:657px;width:50px;height:15px;background:#c69c72;border-color:#967452"><b><i>GoLink</i></b></div>
<div class="c " style="left:644px;top:675px;width:50px;height:24px;background:#c69c72;border-color:#967452"><b><i>Intel</i></b></div>
<div class="c " style="left:697px;top:646px;width:23px;height:39px;background:#c69c72;border-color:#967452"><b><i>Web</i><i>73.0MB</i></b></div>
<div class="c " style="left:723px;top:646px;width:17px;height:39px;background:#c69c72;border-color:#967452"><b><i>360</i><i>57.0</i></b></div>
<div class="c " style="left:721px;top:688px;width:19px;height:38px;background:#c69c72;border-color:#967452"><b><i>Mic</i><i>36.5</i></b></div>
<div class="c " style="left:880px;top:546px;width:74px;height:91px;background:#c69c72;border-color:#967452"><b><i>Weixin</i><i>756.2MB</i></b></div>
<div class="c " style="left:953px;top:546px;width:40px;height:91px;background:#c69c72;border-color:#967452"><b><i>WeType</i><i>402.1MB</i></b></div>
<div class="c " style="left:880px;top:651px;width:66px;height:75px;background:#c69c72;border-color:#967452"><b><i>9.36.06N</i><i>575.1MB</i></b></div>
<div class="c " style="left:949px;top:640px;width:21px;height:27px;background:#c69c72;border-color:#967452"><b><i>Micr</i><i>68.3</i></b></div>
<div class="c " style="left:973px;top:640px;width:20px;height:27px;background:#c69c72;border-color:#967452"><b><i>micr</i><i>53.6</i></b></div>
<div class="c " style="left:949px;top:670px;width:21px;height:22px;background:#c69c72;border-color:#967452"><b><i>Med</i></b></div>
<div class="c " style="left:949px;top:695px;width:21px;height:31px;background:#c69c72;border-color:#967452"><b><i>Micr</i><i>34.9</i></b></div>
<div class="c " style="left:973px;top:695px;width:20px;height:31px;background:#c69c72;border-color:#967452"><b><i>tool</i><i>3.2M</i></b></div>
</div>
<div id="status"><div class="abs" style="left:1.3px;top:4.3px;font-size:12px;line-height:12px;white-space:nowrap"><span class="k" style="width:36px;font-size:12px">扫描中</span>..</div>
<svg class="abs" style="left:986px;top:7.6px" width="12" height="12" viewBox="0 0 12 12" fill="#bfbfbf"><rect x="8" y="1" width="2" height="2"/><rect x="5" y="4" width="2" height="2"/><rect x="8" y="4" width="2" height="2"/><rect x="2" y="7" width="2" height="2"/><rect x="5" y="7" width="2" height="2"/><rect x="8" y="7" width="2" height="2"/></svg>
</div>
</body></html>
